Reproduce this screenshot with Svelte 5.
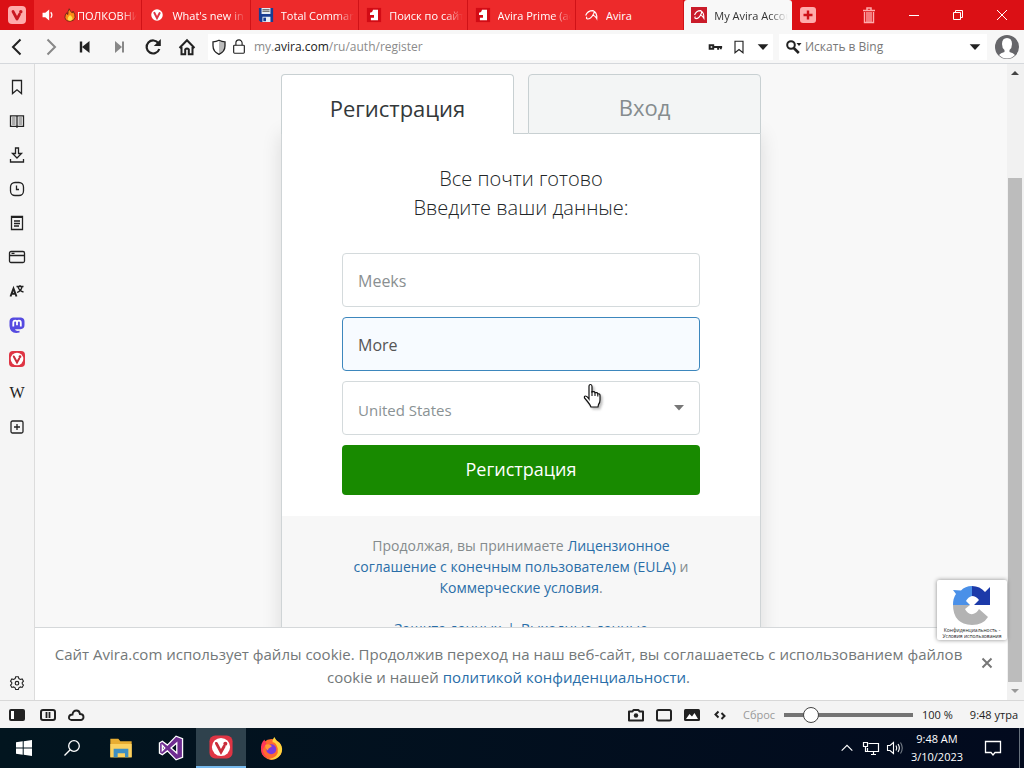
<script>
  const tabs = [
    { title: 'ПОЛКОВНИК', icon: 'flame', audio: true },
    { title: "What's new in Vivaldi", icon: 'vivaldiRound' },
    { title: 'Total Commander', icon: 'floppy' },
    { title: 'Поиск по сайту', icon: 'one' },
    { title: 'Avira Prime (activation)', icon: 'one' },
    { title: 'Avira', icon: 'umbrella' },
    { title: 'My Avira Account', icon: 'aviraBox', active: true }
  ];

  const navigation = [
    ['Назад', 'back'],
    ['Вперёд', 'forward'],
    ['Перемотать назад', 'rewind'],
    ['Перемотать вперёд', 'fast'],
    ['Обновить', 'reload'],
    ['Домашняя страница', 'home']
  ];

  const panels = [
    ['Закладки', 'bookmark'],
    ['Список для чтения', 'reading'],
    ['Загрузки', 'download'],
    ['История', 'clock'],
    ['Заметки', 'notes'],
    ['Окно', 'window'],
    ['Перевод', 'translate'],
    ['Mastodon', 'mastodon'],
    ['Vivaldi', 'vivaldi'],
    ['Wikipedia', 'wiki'],
    ['Добавить веб-панель', 'addPanel']
  ];

  let firstName = $state('');
  let lastName = $state('More');
  let zoom = $state(100);
</script>

{#snippet icon(name, size = 18)}
  <svg width={size} height={size} viewBox="0 0 18 18" fill="none" stroke="currentColor" stroke-width="1.3" aria-hidden="true">
    {#if name === 'back'}
      <path d="M12.5 1.5 5 9l7.5 7.5" stroke-width="2" />
    {:else if name === 'forward'}
      <path d="M5.5 1.5 13 9l-7.5 7.5" stroke-width="2" />
    {:else if name === 'rewind'}
      <path d="M5 3.500v11" stroke-width="2.400" /><path d="M13.500 3v12L6 9z" fill="currentColor" stroke="none" />
    {:else if name === 'fast'}
      <path d="M13 3.500v11" stroke-width="2" /><path d="M5 3v12l7-6z" fill="currentColor" stroke="none" />
    {:else if name === 'reload'}
      <path d="M14.500 5.300A6.500 6.500 0 1 0 15.300 11" stroke-width="2.200" /><path d="M16.800 1v7h-7z" fill="currentColor" stroke="none" />
    {:else if name === 'home'}
      <path d="M1.500 10 9 2.300l7.500 7.700M3.500 9v7.200h3.700v-4.700q1.800-2 3.600 0v4.700h3.700V9" stroke-width="2" />
    {:else if name === 'shield'}
      <path d="M9 3v13q6-2.500 6-8.500V4.200Q12 4.200 9 3" fill="#bbb" stroke="none" /><path d="M9 2.300q2.800 1.500 6 1.500v4q0 6-6 8.500-6-2.500-6-8.500v-4q3.200 0 6-1.500z" />
    {:else if name === 'lock'}
      <rect x="3" y="7" width="12" height="9" rx="1" /><path d="M5.500 7V4.500a3.500 3.500 0 0 1 7 0V7" />
    {:else if name === 'key'}
      <path d="M3 7h4v4H3zM7.500 9h9.500M12.500 9v3M15.500 9v2.500" stroke-width="2.200" />
    {:else if name === 'bookmark'}
      <path d="M4.500 2.500h9v13L9 11.800l-4.500 3.700z" />
    {:else if name === 'down'}
      <path d="M3 6h12l-6 6.500z" fill="currentColor" stroke="none" />
    {:else if name === 'magnifier'}
      <circle cx="7" cy="7" r="3.800" stroke-width="2" /><path d="m9.800 10 5 5" stroke-width="2.600" /><path d="M12.500 5h5L15 8z" fill="currentColor" stroke="none" />
    {:else if name === 'reading'}
      <path d="M2.500 3.800h6l.5.600.5-.600h6v10.500H10l-1 .8-1-.8H2.500zM9 4.500v10" /><path d="M4 6h3.500M4 8h3.500M4 10h3.500M4 12h3.500M10.500 6H14M10.500 8H14M10.500 10H14M10.500 12H14" stroke-width=".7" />
    {:else if name === 'download'}
      <path d="M7.500 2h3v5.500h3L9 12 4.500 7.500h3zM2.500 13v3h13v-3" />
    {:else if name === 'clock'}
      <rect x="2.500" y="2.500" width="13" height="13" rx="4.500" /><path d="M8.500 5.500v4H11" />
    {:else if name === 'notes'}
      <path d="M3.500 2.500h11v13h-11z" /><path d="M3.500 3h11" stroke-width="2" /><path d="M6 7h6M6 9.500h6M6 12h5" />
    {:else if name === 'window'}
      <rect x="1.500" y="3.500" width="15" height="11" rx="1.500" /><path d="M1.500 7.500h15M3.500 5.300h3" />
    {:else if name === 'translate'}
      <path d="m2.500 14.500 3-8 3 8M3.600 11.800h3.900" stroke-width="1.900" /><path d="M8.500 4.500h7M12 3v1.500M10 5q1.500 4 5.500 5M14 5q-1 4-5 5.500" />
    {:else if name === 'mastodon'}
      <path d="M5 1.500h8q3.500.5 3.500 4V9q0 4-4 4.200H7q.3 2.300 4.500 1.600v1.700Q2 18.500 1.500 10V5.500q0-3.500 3.500-4z" fill="#554ae0" stroke="none" /><path d="M5.300 10.500V6.700q0-2 1.900-2T9 6.700v2.500-2.500q0-2 1.900-2t1.900 2v3.800" stroke="#fff" stroke-width="1.800" />
    {:else if name === 'vivaldi'}
      <rect x="1" y="1" width="16" height="16" rx="4" fill="#df3544" stroke="none" /><circle cx="9" cy="9" r="6.300" fill="#fff" stroke="none" /><path d="m5.800 6.500 3.200 6 2.200-4" stroke="#c92e3b" stroke-width="2" stroke-linecap="round" /><circle cx="12" cy="6.700" r="1.400" fill="#c92e3b" stroke="none" />
    {:else if name === 'vivaldiRound'}
      <circle cx="9" cy="9" r="6.500" fill="#fff" stroke="none" /><path d="m6 6.500 3 6 3-5.700" stroke="#df3544" stroke-width="2.200" stroke-linecap="round" />
    {:else if name === 'menu'}
      <rect width="18" height="18" rx="4" fill="#ffabab" stroke="none" /><path d="m5 5.500 4 7.500 2.500-4.700" stroke="#c91720" stroke-width="2.800" stroke-linecap="round" stroke-linejoin="round" /><circle cx="12.800" cy="5.700" r="1.700" fill="#c91720" stroke="none" />
    {:else if name === 'addPanel'}
      <rect x="3" y="3" width="12" height="12" rx="1.500" /><path d="M9 6v6M6 9h6" />
    {:else if name === 'settings'}
      <path d="m7.500 2 3 0 .6 2 1.700 1 2-.6 1.500 2.600-1.400 1.500v1.400l1.400 1.500-1.500 2.600-2-.6-1.700 1-.6 2h-3l-.6-2-1.700-1-2 .6-1.500-2.600 1.400-1.500V8.500L1.700 7l1.500-2.600 2 .6 1.700-1z" stroke-width="1.200" /><circle cx="9" cy="9.200" r="2" />
    {:else if name === 'audio'}
      <path d="M2 6h3.500l5-4v14l-5-4H2z" fill="currentColor" stroke="none" /><path d="M12.500 5.500q3 3.500 0 7" stroke-width="1.600" />
    {:else if name === 'flame'}
      <path d="M8 1q1 3 4 5.500 1-1 .8-2.500Q16 8 15.500 12q-.8 5-6.500 5-6 0-6.500-5Q2.200 9 5 6q0 2 1.200 2.500Q6 4 8 1z" fill="#ff8a18" stroke="#542316" stroke-width="1" /><path d="M9 9q4 3 3 5.500-1 2-3 2t-3-2Q5.500 12 9 9z" fill="#ffe04a" stroke="none" />
    {:else if name === 'floppy'}
      <path d="M1 1h16v16H3l-2-2z" fill="#173d93" stroke="none" /><path d="M4 1h10v7H4zM5 11h9v6H5z" fill="#e6edf5" stroke="none" /><path d="M5 3h8M5 5h8" stroke="#777" /><path d="M6 12h3v4H6z" fill="#173d93" stroke="none" />
    {:else if name === 'one'}
      <rect x="1" y="1" width="16" height="16" fill="#d20b15" stroke="none" /><path d="M8 3h5.500v12h-8v-3H9V9H4.500V6.500Q7.500 6 8 3z" fill="#fff" stroke="none" />
    {:else if name === 'umbrella'}
      <path d="M3 9.500Q5 4 11 4q2.500.2 1 3.500Q9 13.500 5 13.500q-2-.5-.5-2.500M11 4q5 2 4.500 9-1.500-3-4.500-4" stroke="#fff" stroke-width="1.300" />
    {:else if name === 'aviraBox'}
      <rect width="18" height="18" fill="#ca1c2a" stroke="none" /><path d="M4 9Q6 4 10.500 4q2.500.2 1 3.500Q9 13 5.500 13q-2-.5-.5-2.200M10.500 4q4.300 2 4 8.500-1.500-2.800-4-3.500" stroke="#fff" stroke-width="1.300" />
    {:else if name === 'plus'}
      <rect x="1" y="1" width="16" height="16" rx="3" fill="#ffabab" stroke="none" /><path d="M9 4.500v9M4.500 9h9" stroke="#cf1118" stroke-width="2.400" />
    {:else if name === 'trash'}
      <path d="M3 4.500h12M7 4V2h4v2" stroke-width="1.500" /><path d="M4.500 6v10.500h9V6M7 6v10M9 6v10M11 6v10" stroke-width="1.400" />
    {:else if name === 'minimize'}
      <path d="M4 9.500h10" stroke-width="1" />
    {:else if name === 'restore'}
      <path d="M4.500 6.500h7v7h-7zM6.500 6V4.500h7v7H12" stroke-width="1" />
    {:else if name === 'close'}
      <path d="m4 4 10 10M14 4 4 14" stroke-width="1" />
    {:else if name === 'panelToggle'}
      <rect x="1" y="3" width="16" height="12" rx="2" fill="currentColor" stroke="none" /><path d="M3 5h3v8H3z" fill="#fff" stroke="none" />
    {:else if name === 'pause'}
      <rect x="2" y="4" width="14" height="10" rx="2" stroke-width="2" /><path d="M7.500 6v6M10.500 6v6" stroke-width="1.800" />
    {:else if name === 'cloud'}
      <path d="M4.500 14Q1.500 13.500 2 11t3.500-2.500q.5-4 4-4 3 0 3.500 3.500 3.500 0 3.500 3 0 2.500-2.500 3z" stroke-width="1.900" />
    {:else if name === 'camera'}
      <path d="M2 14.500v-9h3.500l1-1.500h5l1 1.500H16v9z" stroke-width="2" stroke-linejoin="round" /><circle cx="9" cy="9.500" r="2.200" fill="currentColor" stroke="none" />
    {:else if name === 'tiling'}
      <rect x="2" y="4" width="14" height="10.500" rx="1.500" stroke-width="2" />
    {:else if name === 'image'}
      <rect x="1" y="3" width="16" height="12" rx="1.500" fill="currentColor" stroke="none" /><path d="m3 13 3.500-5L9 10.500 11.500 7l3.500 6z" fill="#fff" stroke="none" />
    {:else if name === 'code'}
      <path d="M7.500 5.500 4.500 8.500l3 3M10.500 7l3 3-3 3" stroke-width="2" />
    {:else if name === 'start'}
      <path d="m1 3.300 6.700-1v6.200H1zM8.700 2.200 17 1v7.500H8.700zM1 9.500h6.700v6.200l-6.700-1zM8.700 9.500H17V17l-8.300-1.200z" fill="#fff" stroke="none" />
    {:else if name === 'search'}
      <circle cx="11" cy="7" r="5.300" /><path d="M7.200 10.800 1.500 16.500" />
    {:else if name === 'folder'}
      <path d="M1 2h6l1.500 2H17v12H1z" fill="#e8ad32" stroke="none" /><path d="M1 6h16v10H1z" fill="#fbd160" stroke="none" /><path d="M3.500 9.500h11V16H12v-3H6.500v3h-3z" fill="#3d8fc4" stroke="none" />
    {:else if name === 'vs'}
      <path d="M1 5.500 3 4.300 6.500 7 12.500.8 17 2.500v13l-4.500 1.700L6.500 11 3 13.700l-2-1.200zM3 7.200v3.600L4.700 9zM9 9l4 3.500v-7z" fill="#6f2d91" fill-rule="evenodd" stroke="#fff" stroke-width=".9" />
    {:else if name === 'firefox'}
      <circle cx="9" cy="9.700" r="7.500" fill="#ff6a2e" stroke="none" /><path d="M11 .7q1.300 3 4 4.300Q18 9 15.500 13.500 12 18 7 16.500q7.500-1 6.500-7.500Q12 4 9.800 4.500 9.500 2.500 11 .7z" fill="#ffd43d" stroke="none" /><path d="M1.500 10Q1 5 4 2.500q0 2 1.500 2.500L2.700 9.700q0 3 3.300 6Q2 14.500 1.500 10z" fill="#ff3657" stroke="none" /><circle cx="8.800" cy="9.600" r="3.600" fill="#7b3bdd" stroke="none" /><path d="M4.500 6.500q2.300-1.200 4.300.3 1 .7-.8 1.500-1.500.7-1.700 2.200-2-1.500-1.800-4z" fill="#ff9a36" stroke="none" />
    {:else if name === 'chevronUp'}
      <path d="m3 12 6-6 6 6" />
    {:else if name === 'network'}
      <path d="M6.500 4.500h10v8h-11V9M9 15.500h5M11.500 13v2.500M1.500 3.500h4v4h-4zM3.500 7.500v5h2" stroke-width="1.200" />
    {:else if name === 'volume'}
      <path d="M1.500 6.500H4L7.500 3.500v11L4 11.500H1.500z" stroke-width="1.100" /><path d="M10 6.500q1.500 2.500 0 5M12 5q2.700 4 0 8" stroke-width="1.100" /><path d="M14.500 3.500q3.500 5.500 0 11" stroke="#777f88" stroke-width="1.100" />
    {:else if name === 'notification'}
      <path d="M1.500 2.500h15v11H11L9 16l-2-2.500H1.500z" />
    {/if}
  </svg>
{/snippet}

<div class="screen">
  <header>
    <div class="titlebar">
      <button class="menu" aria-label="Меню Vivaldi">{@render icon('menu')}</button>
      <div class="tabs" role="tablist">
        {#each tabs as tab}
          <button class="tab" class:active={tab.active} class:audio={tab.audio} role="tab" aria-selected={!!tab.active}>
            {#if tab.audio}{@render icon('audio', 14)}{/if}
            {@render icon(tab.icon, tab.audio ? 14 : 16)}
            <span>{tab.title}</span>
          </button>
        {/each}
      </div>
      <button class="newtab" aria-label="Новая вкладка">{@render icon('plus')}</button>
      <button class="trash" aria-label="Закрытые вкладки">{@render icon('trash')}</button>
      <button class="caption" aria-label="Свернуть">{@render icon('minimize')}</button>
      <button class="caption" aria-label="Восстановить">{@render icon('restore')}</button>
      <button class="caption" aria-label="Закрыть">{@render icon('close')}</button>
    </div>
    <div class="toolbar">
      {#each navigation as [label, name]}
        <button class="tool" class:dim={name === 'forward' || name === 'fast'} aria-label={label}>{@render icon(name)}</button>
      {/each}
      <div class="address">
        {@render icon('shield')}
        {@render icon('lock', 16)}
        <a href="#address"><span>my.</span>avira.com<span>/ru/auth/register</span></a>
        <button aria-label="Пароли">{@render icon('key', 16)}</button>
        <button aria-label="Добавить закладку">{@render icon('bookmark', 16)}</button>
        <button aria-label="История адресов">{@render icon('down', 16)}</button>
      </div>
      <div class="search">
        {@render icon('magnifier')}
        <input type="search" placeholder="Искать в Bing" aria-label="Искать в Bing" />
        <button aria-label="Поисковые системы">{@render icon('down', 16)}</button>
      </div>
      <button class="avatar" aria-label="Профиль">
        <svg width="24" height="24" viewBox="0 0 24 24" aria-hidden="true">
          <circle cx="12" cy="12" r="12" fill="#66666a" />
          <path d="M7 9q0-6 5-6t5 6q0 4-2.500 6v2q4 1 5.500 3-3.500 3.500-8 3.500T4 20q1.500-2 5.500-3v-2Q7 13 7 9z" fill="#fff" />
        </svg>
      </button>
    </div>
  </header>

  <div class="workspace">
    <nav class="panels" aria-label="Панели">
      {#each panels as [label, name]}
        <button aria-label={label}>
          {#if name === 'wiki'}<span class="wiki">W</span>{:else}{@render icon(name)}{/if}
        </button>
      {/each}
      <button class="settings" aria-label="Настройки">{@render icon('settings', 16)}</button>
    </nav>

    <div class="webview">
      <main>
        <section class="card">
          <div class="switch">
            <a class="current" href="#register">Регистрация</a>
            <span class="gap"></span>
            <a href="#login">Вход</a>
          </div>
          <div class="content">
            <h1>Все почти готово<br />Введите ваши данные:</h1>
            <form onsubmit={(event) => event.preventDefault()}>
              <input type="text" placeholder="Meeks" aria-label="Имя" bind:value={firstName} />
              <input class="focused" type="text" aria-label="Фамилия" bind:value={lastName} />
              <div class="country">
                <select aria-label="Страна"><option>United States</option></select>
                <svg class="arrow" width="10" height="6" viewBox="0 0 10 6" aria-hidden="true"><path d="M0 0h10L5 5.500z" fill="#777" /></svg>
                <svg class="pointer" width="20" height="26" viewBox="0 0 20 26" aria-hidden="true">
                  <path d="M6 16V3.500Q6 1.500 7.500 1.500T9 3.500V9q2.500-1 3 .8 2.200-.8 2.800 1 2.200-.3 2.200 1.700V17q0 3-1.500 4.500L15 24H8q-1-2.500-3.500-5.500L1.500 15q-.5-2 1-2T6 16z" fill="#fff" stroke="#111" stroke-width="1.200" />
                  <path d="M9 8v5M12 9.500V13M14.800 11v2.500" stroke="#111" stroke-width="1.100" />
                </svg>
              </div>
              <button type="submit">Регистрация</button>
            </form>
          </div>
          <footer>
            <p>Продолжая, вы принимаете <a href="#eula">Лицензионное соглашение с конечным пользователем (EULA)</a> и <a href="#terms">Коммерческие условия</a>.</p>
            <p class="links"><a href="#privacy">Защита данных</a><span>|</span><a href="#imprint">Выходные данные</a></p>
          </footer>
        </section>
      </main>
      <aside class="cookie">
        <p>Сайт Avira.com использует файлы cookie. Продолжив переход на наш веб-сайт, вы соглашаетесь с использованием файлов cookie и нашей <a href="#cookies">политикой конфиденциальности</a>.</p>
        <button aria-label="Закрыть уведомление">
          <svg width="12" height="12" viewBox="0 0 12 12" aria-hidden="true"><path d="m1.500 1.500 9 9M10.500 1.500l-9 9" stroke="#777" stroke-width="2" /></svg>
        </button>
      </aside>
      <div class="captcha">
        <svg width="40" height="40" viewBox="0 0 40 40" aria-hidden="true">
          <path d="M20 1v10q-4 1-6 5l4 4H1q0-7 3-11L1 5q4 0 8 .5Q13 1 20 1z" fill="#4a90e8" />
          <path d="M20 1q8 0 13 6l5-5v18H22l5-5q-3-4-7-4z" fill="#1c3aa9" />
          <path d="M1 20h17l-5 4q3 6 8 5 4-1 6-5l9 8q-5 8-16 8Q1 39 1 20z" fill="#b3b3b3" />
        </svg>
        <span><a href="#captcha-privacy">Конфиденциальность</a> -<br /><a href="#captcha-terms">Условия использования</a></span>
      </div>
    </div>

    <div class="scrollbar" aria-hidden="true">
      <svg width="8" height="18" viewBox="0 0 8 18"><path d="M4 7l4 4H0z" fill="#444" /></svg>
      <div class="track"><div class="thumb"></div></div>
      <svg width="8" height="18" viewBox="0 0 8 18"><path d="M0 7h8l-4 4z" fill="#999" /></svg>
    </div>
  </div>

  <div class="status">
    <button aria-label="Показать панель">{@render icon('panelToggle')}</button>
    <button class="break" aria-label="Перерыв">{@render icon('pause')}</button>
    <button aria-label="Синхронизация">{@render icon('cloud')}</button>
    <span class="space"></span>
    <button aria-label="Снимок страницы">{@render icon('camera')}</button>
    <button aria-label="Разделение экрана">{@render icon('tiling')}</button>
    <button aria-label="Изображения">{@render icon('image')}</button>
    <button aria-label="Эффекты страницы">{@render icon('code')}</button>
    <button class="reset">Сброс</button>
    <input type="range" min="20" max="500" aria-label="Масштаб" bind:value={zoom} />
    <span class="percent">{zoom} %</span>
    <span class="time">9:48 утра</span>
  </div>

  <div class="taskbar">
    <button class="system" aria-label="Пуск">{@render icon('start')}</button>
    <button class="system" aria-label="Поиск">{@render icon('search')}</button>
    <button aria-label="Проводник">{@render icon('folder', 24)}</button>
    <button aria-label="Visual Studio">{@render icon('vs', 26)}</button>
    <button class="running" aria-label="Vivaldi">{@render icon('vivaldi', 26)}</button>
    <button aria-label="Firefox">{@render icon('firefox', 25)}</button>
    <span class="space"></span>
    <button class="tray" aria-label="Скрытые значки">{@render icon('chevronUp', 16)}</button>
    <button class="tray" aria-label="Сеть">{@render icon('network')}</button>
    <button class="tray" aria-label="Громкость">{@render icon('volume')}</button>
    <button class="datetime">9:48 AM<br />3/10/2023</button>
    <button class="notify" aria-label="Уведомления">{@render icon('notification')}</button>
    <span class="desktop"></span>
  </div>
</div>

<style>
  :global(body) {
    margin: 0;
    font-family: "Open Sans", "Noto Sans", sans-serif;
  }

  .screen, .screen * { box-sizing: border-box; }
  .screen {
    display: flex;
    flex-direction: column;
    height: 100vh;
    overflow: hidden;
    font-size: 11px;
    color: #222;
  }
  button, input, select { font: inherit; color: inherit; }
  button {
    display: flex;
    align-items: center;
    justify-content: center;
    flex: none;
    padding: 0;
    border: 0;
    background: none;
  }
  svg { display: block; flex: none; }
  a { color: #2a6ea8; text-decoration: none; }
  p, h1 { margin: 0; }
  .space { flex: 1; }

  .titlebar {
    display: flex;
    height: 30px;
    background: #db1015;
    color: #fff;
  }
  .menu { width: 34px; }
  .tabs { display: flex; width: 74%; }
  .tab {
    flex: 1;
    min-width: 0;
    justify-content: flex-start;
    gap: 7px;
    padding: 0 4px 0 7px;
    border-right: 1px solid #d01217;
    background: #ed2a2b;
  }
  .tab.audio { gap: 8px; }
  .tab.audio span { margin-left: -8px; }
  .tab span {
    flex: 1;
    min-width: 0;
    overflow: hidden;
    white-space: nowrap;
    text-align: left;
    mask-image: linear-gradient(to right, #000 75%, transparent);
  }
  .tab:nth-child(6) span { mask-image: none; }
  .tab.active { border: 0; background: #f8f8f8; color: #333; border-radius: 3px 3px 0 0; }
  .newtab { width: 32px; color: #fff; }
  .trash { width: 46px; margin-left: 22px; color: #ffabab; }
  .caption { flex: 1; }

  .toolbar {
    display: flex;
    align-items: center;
    height: 34px;
    border-bottom: 1px solid #d5d8dc;
    background: #f7f7f7;
  }
  .tool { width: 34px; height: 33px; }
  .dim { color: #888; }
  .address, .search {
    display: flex;
    align-items: center;
    height: 26px;
    background: #fff;
    font-size: 12px;
  }
  .address { flex: 1; margin-left: 4px; padding-left: 2px; gap: 3px; }
  .address a { flex: 1; margin-left: 4px; color: #222; }
  .address a span { color: #8b8b8b; }
  .address button { width: 21px; }
  .search { width: 208px; margin-left: 6px; padding: 0 2px 0 5px; }
  .search input { flex: 1; min-width: 0; padding: 0 3px; border: 0; outline: 0; background: none; }
  .search input::placeholder { color: #777; opacity: 1; }
  .search button { width: 20px; }
  .avatar { width: 37px; padding-left: 3px; }

  .workspace { display: flex; flex: 1; min-height: 0; }
  .panels {
    display: flex;
    flex-direction: column;
    width: 35px;
    padding-top: 6px;
    border-right: 1px solid #dcdcdc;
    background: #f5f5f5;
  }
  .panels button { height: 34px; }
  .wiki { font-family: "Liberation Serif", serif; font-size: 16px; }
  .panels .settings { margin-top: auto; }

  .webview {
    position: relative;
    display: flex;
    flex: 1;
    flex-direction: column;
    min-width: 0;
    background: #f8f8f8;
  }
  main { flex: 1; min-height: 0; padding-top: 10px; overflow: hidden; }
  .card {
    width: min(480px, 100%);
    margin: 0 auto;
    box-shadow: 0 60px 20px rgba(0, 0, 0, .12);
    border-radius: 4px;
  }
  .switch { display: flex; height: 60px; background: #f8f8f8; }
  .switch a {
    display: flex;
    flex: 1;
    align-items: center;
    justify-content: center;
    padding-top: 6px;
    border: 1px solid #c8d0d2;
    border-radius: 4px 4px 0 0;
    background: #f3f5f5;
    color: #858c8e;
    font-size: 22px;
  }
  .switch .current { border-bottom: 0; background: #fff; color: #33383a; }
  .gap { width: 14px; border-bottom: 1px solid #c8d0d2; }
  .content {
    padding: 30px 60px 21px;
    border: solid #cfd4d6;
    border-width: 0 1px;
    background: #fff;
  }
  h1 {
    margin-bottom: 31px;
    color: #222628;
    font-size: 20px;
    font-weight: 300;
    line-height: 29px;
    text-align: center;
  }
  form { display: flex; flex-direction: column; gap: 10px; font-size: 16px; }
  form input, select {
    width: 100%;
    height: 54px;
    padding: 2px 15px 0;
    border: 1px solid #d4dadc;
    border-radius: 4px;
    outline: 0;
    background: #fff;
    color: #555;
  }
  form input::placeholder { color: #8a8f91; opacity: 1; }
  form .focused { border-color: #3d87bd; background: #f7fbff; }
  .country { position: relative; }
  select { display: block; appearance: none; padding-top: 4px; color: #8a9294; font-size: 15px; }
  .arrow { position: absolute; top: 24px; right: 16px; pointer-events: none; }
  .pointer { position: absolute; top: 2px; right: 97px; filter: drop-shadow(2px 2px 1px #8888); pointer-events: none; }
  form button {
    height: 50px;
    padding-bottom: 2px;
    border-radius: 4px;
    background: #188a00;
    color: #fff;
    font-size: 18px;
  }
  .card footer {
    padding: 19px 60px 30px;
    border: solid #cfd4d6;
    border-width: 0 1px 1px;
    background: #f7f7f7;
    color: #858b8d;
    font-size: 14px;
    line-height: 21px;
    text-align: center;
  }
  .links { margin-top: 20px; }
  .links span { margin: 0 6px; color: #2a6ea8; }

  .cookie {
    display: flex;
    align-items: center;
    height: 73px;
    padding: 4px 14px 0 19px;
    border-top: 1px solid #d5d8da;
    background: #fff;
    color: #737879;
    font-size: 15px;
    line-height: 23px;
    text-align: center;
  }
  .cookie p { flex: 1; }
  .cookie button { margin: 0 0 6px 18px; }
  .captcha {
    position: absolute;
    right: 0;
    bottom: 60px;
    display: flex;
    flex-direction: column;
    align-items: center;
    width: 70px;
    height: 60px;
    padding-top: 5px;
    border-radius: 2px;
    background: #fff;
    box-shadow: 0 0 4px #888;
    color: #222;
    font-size: 5px;
    line-height: 6px;
    text-align: center;
    white-space: nowrap;
  }
  .captcha span { margin-top: 2px; }
  .captcha a { color: inherit; }

  .scrollbar {
    display: flex;
    flex-direction: column;
    align-items: center;
    width: 17px;
    padding: 0 2px 0 1px;
    background: #f1f1f1;
  }
  .track { display: flex; flex: 1; flex-direction: column; justify-content: flex-end; width: 100%; }
  .thumb { height: 84%; background: #bcbcbc; }

  .status {
    display: flex;
    align-items: center;
    height: 28px;
    padding: 0 6px 0 3px;
    border-top: 1px solid #d8d8d8;
    background: #f4f4f4;
    white-space: nowrap;
  }
  .status button { width: 28px; height: 100%; }
  .status .break { margin-left: 3px; }
  .status .reset { width: 50px; color: #999; }
  .status input {
    width: 129px;
    height: 18px;
    margin: 0;
    appearance: none;
    background: linear-gradient(#747474, #747474) center / 100% 4px no-repeat;
  }
  .status input::-webkit-slider-thumb {
    appearance: none;
    width: 16px;
    height: 16px;
    border: 1px solid #444;
    border-radius: 50%;
    background: #fff;
  }
  .percent { margin-left: 9px; }
  .time { margin-left: 17px; }

  .taskbar {
    display: flex;
    align-items: center;
    height: 40px;
    background: linear-gradient(90deg, #02151f, #020a1e);
    color: #fff;
  }
  .taskbar button { width: 50px; height: 40px; }
  .taskbar .system { width: 48px; }
  .taskbar .running { border-bottom: 2px solid #76b9ed; background: #2f424d; }
  .taskbar .tray { width: 24px; }
  .taskbar .datetime { width: 60px; line-height: 18px; }
  .taskbar .notify { width: 52px; }
  .desktop { width: 5px; height: 40px; border-left: 1px solid #67717d; }
</style>
